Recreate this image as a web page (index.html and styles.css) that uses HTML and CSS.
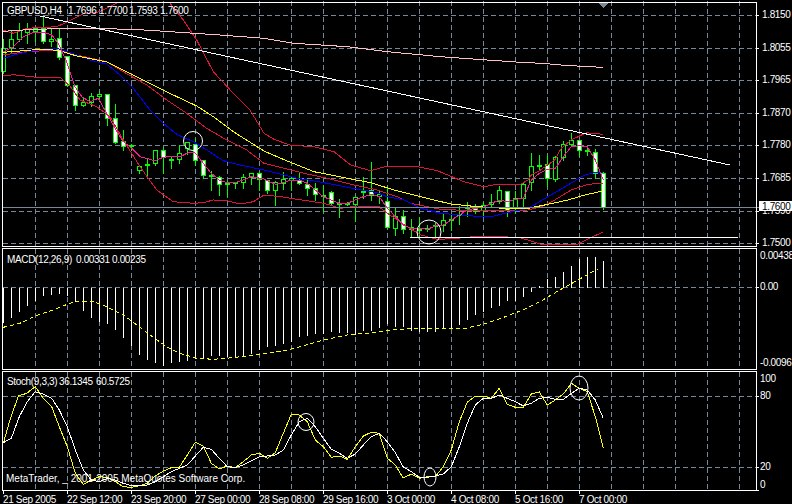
FILE: index.html
```html
<!DOCTYPE html>
<html lang="en">
<head>
<meta charset="UTF-8">
<meta name="viewport" content="width=device-width, initial-scale=1.0">
<title>GBPUSD,H4</title>
<link rel="stylesheet" href="styles.css">
</head>
<body>

<div class="chart">
    <!-- Price pane -->
    <svg id="price" class="pane" width="792" height="248">
        <g class="plot"></g>
        <rect class="frame" x="2.5" y="2.5" width="754" height="244"></rect>
        <polygon class="shift-mark" points="599,3 608,3 603.5,8"></polygon>
        <text class="legend" y="14">
            <tspan x="7">GBPUSD,H4</tspan>
            <tspan x="68">1.7696</tspan>
            <tspan x="99">1.7700</tspan>
            <tspan x="129">1.7593</tspan>
            <tspan x="160">1.7600</tspan>
        </text>
        <g class="axis">
            <text x="762" y="18">1.8150</text>
            <text x="762" y="51">1.8055</text>
            <text x="762" y="83">1.7965</text>
            <text x="762" y="116">1.7870</text>
            <text x="762" y="148">1.7780</text>
            <text x="762" y="181">1.7685</text>
            <text x="762" y="214">1.7590</text>
            <text x="762" y="246">1.7500</text>
        </g>
        <rect class="bid-box" x="759" y="201" width="33" height="10"></rect>
        <text class="bid-text" x="762" y="210">1.7600</text>
    </svg>

    <!-- MACD pane -->
    <svg id="macd" class="pane" width="792" height="123">
        <g class="plot"></g>
        <rect class="frame" x="2.5" y="0.5" width="754" height="121"></rect>
        <text class="legend" y="15">
            <tspan x="7">MACD(12,26,9)</tspan>
            <tspan x="76">0.00331</tspan>
            <tspan x="112">0.00235</tspan>
        </text>
        <g class="axis">
            <text x="760" y="11">0.00438</text>
            <text x="760" y="42">0.00</text>
            <text x="760" y="118">-0.00961</text>
        </g>
    </svg>

    <!-- Stochastic pane -->
    <svg id="stoch" class="pane" width="792" height="120">
        <g class="plot"></g>
        <rect class="frame" x="2.5" y="0.5" width="754" height="119"></rect>
        <text class="legend" y="14">
            <tspan x="7">Stoch(9,3,3)</tspan>
            <tspan x="59">36.1345</tspan>
            <tspan x="96">60.5725</tspan>
        </text>
        <text class="copyright" x="6" y="111">MetaTrader, _ 2001-2005 MetaQuotes Software Corp.</text>
        <g class="axis">
            <text x="760" y="11">100</text>
            <text x="760" y="28">80</text>
            <text x="760" y="99">20</text>
            <text x="760" y="117">0</text>
        </g>
    </svg>

    <!-- Time axis -->
    <div class="time-axis">
        <span>21 Sep 2005</span>
        <span>22 Sep 12:00</span>
        <span>23 Sep 20:00</span>
        <span>27 Sep 00:00</span>
        <span>28 Sep 08:00</span>
        <span>29 Sep 16:00</span>
        <span>3 Oct 00:00</span>
        <span>4 Oct 08:00</span>
        <span>5 Oct 16:00</span>
        <span>7 Oct 00:00</span>
    </div>
</div>

<script src="chart.js"></script>
</body>
</html>
```

FILE: styles.css
```css
body {
    margin: 0;
    background: #000;
    overflow: hidden;
}

.chart {
    display: flex;
    flex-direction: column;
    width: 792px;
    height: 504px;
    font-family: "Liberation Sans", Arial, sans-serif;
    font-size: 10px;
    letter-spacing: -0.35px;
    color: #fff;
}

.pane {
    display: block;
    flex: none;
    shape-rendering: crispEdges;
}

.frame {
    fill: none;
    stroke: #fff;
}

.pane text {
    fill: #fff;
    font-size: 10px;
}

.pane .copyright {
    letter-spacing: 0;
}

.shift-mark {
    fill: #778899;
}

.grid {
    stroke: #778899;
    stroke-dasharray: 5 3;
}

.price-line {
    stroke: #778899;
}

.tick {
    stroke: #fff;
}

.pane .bid-text {
    fill: #000;
}

.bid-box {
    fill: #fff;
}

.line {
    fill: none;
}

.circle {
    fill: none;
    stroke: #fff;
    shape-rendering: auto;
}

.wick { stroke: #00ff00; }
.candle-up { fill: #000; stroke: #00ff00; }
.candle-down { fill: #fff; stroke: #00ff00; }

.time-axis {
    display: flex;
    padding-left: 3px;
    height: 13px;
    line-height: 11px;
}

.time-axis span {
    width: 64px;
    flex: none;
    white-space: nowrap;
}

.time-axis span::before {
    content: "";
    display: block;
    width: 1px;
    height: 3px;
    background: #fff;
}
```

FILE: chart.js
```js
// all point lists are in 1/3 px, read off in chunks: [originX, originY, x, y, x, y, ...]
var NS = 'http://www.w3.org/2000/svg';

function add(parent, tag, attrs) {
    var el = document.createElementNS(NS, tag);
    for (var k in attrs) el.setAttribute(k, attrs[k]);
    parent.appendChild(el);
    return el;
}

function px(v) {
    return Math.floor(v / 3) + 0.5;
}

function points(chunks) {
    var out = [];
    chunks.forEach(function (c) {
        for (var i = 2; i < c.length; i += 2) {
            out.push((c[0] + c[i] / 3).toFixed(1) + ',' + (c[1] + c[i + 1] / 3).toFixed(1));
        }
    });
    return out.join(' ');
}

function line(parent, chunks, color, dash) {
    var el = add(parent, 'polyline', { 'class': 'line', points: points(chunks), stroke: color });
    if (dash) el.setAttribute('stroke-dasharray', dash);
}

function grid(plot, rows, bottom) {
    rows.forEach(function (y) {
        add(plot, 'line', { 'class': 'grid', x1: 3, x2: 756, y1: y + 0.5, y2: y + 0.5 });
        add(plot, 'line', { 'class': 'tick', x1: 757, x2: 759, y1: y + 0.5, y2: y + 0.5 });
    });
    for (var x = 35; x <= 739; x += 32) {
        add(plot, 'line', { 'class': 'grid', x1: x + 0.5, x2: x + 0.5, y1: 1, y2: bottom });
    }
}

// high, low, body top, body bottom, 1 = white body
var candles = [
    [115,220,145,215,0],[90,160,118,143,0],[66,125,90,118,0],[68,130,88,98,0],[78,125,85,95,0],
    [50,130,85,125,1],[85,140,118,125,0],[85,178,115,172,1],[168,258,170,256,1],[255,330,257,316,1],
    [290,320,306,316,0],[278,320,290,308,0],[270,305,283,290,0],[280,375,283,355,1],[310,430,355,427,1],
    [388,452,425,438,1],[430,450,436,438,0],[492,520,498,512,0],[475,525,493,495,0],[450,495,451,490,0],
    [440,520,451,472,1],[468,505,478,480,0],[432,490,460,478,0],[425,462,428,446,0],[415,497,432,481,1],
    [478,535,481,525,1],[510,572,525,527,0],[525,585,531,553,1],[540,590,549,552,0],[544,564,547,549,0],
    [520,565,533,547,0],[518,552,520,533,0],[515,570,521,538,1],[537,580,540,571,1],[540,617,548,571,0],
    [515,567,538,549,0],[530,570,535,540,0],[515,553,541,550,1],[533,587,552,565,1],[548,600,565,583,1],
    [553,634,585,587,0],[570,612,578,610,1],[595,653,610,613,0],[605,615,610,612,0],[590,665,593,613,0],
    [528,595,575,578,0],[483,600,572,585,1],[570,610,582,590,0],[560,685,605,682,1],[620,705,650,686,0],
    [628,700,650,688,1],[655,712,682,688,0],[650,712,688,690,0],[672,695,686,688,0],[668,712,675,677,0],
    [640,695,662,675,0],[640,692,658,661,0],[615,672,643,646,0],[605,650,623,626,0],[610,640,620,633,1],
    [605,645,615,630,0],[580,620,607,613,0],[555,610,572,605,0],[570,648,575,632,1],[570,640,595,625,0],
    [548,625,552,595,0],[456,572,498,548,0],[462,510,495,497,0],[462,560,492,535,1],[465,545,472,538,0],
    [420,480,433,472,0],[398,440,420,432,0],[418,470,421,452,1],[440,465,451,454,0],[444,535,457,520,1],
    [515,628,520,622,1]
];

// bottom of each MACD bar, measured from y = 245 in 1/3 px; the zero line sits at 127
var macdBars = [
    232,216,200,180,165,150,147,145,150,170,195,218,228,235,252,278,300,327,343,353,
    362,352,350,345,340,340,332,330,335,333,330,325,312,303,300,296,290,275,272,265,
    265,258,262,262,268,255,255,247,235,245,
    245,255,260,258,258,250,250,237,222,207,200,188,180,165,165,155,140,120,100,95,80,60,40,35,33,45
];

function drawPrice() {
    var plot = document.querySelector('#price .plot');
    grid(plot, [15, 48, 80, 113, 145, 178, 211, 243], 246);

    candles.forEach(function (c, i) {
        var x = 3 + 8 * i;
        add(plot, 'line', { 'class': 'wick', x1: x + 0.5, x2: x + 0.5, y1: px(c[0]), y2: px(c[1]) });
        add(plot, 'rect', {
            'class': c[4] ? 'candle-down' : 'candle-up',
            x: x - 1.5, width: 4,
            y: px(c[2]), height: Math.max(1, px(c[3]) - px(c[2]))
        });
    });

    // upper band, split where it leaves the top of the window
    line(plot, [[0, 0, 10,90, 40,100, 80,85, 170,80, 210,62, 250,42, 300,35, 350,10]], '#dc143c');
    line(plot, [[0, 0, 510,10, 550,60, 590,120, 640,215, 700,280, 750,330, 792,400],
        [264, 0, 30,418, 80,436, 150,440, 210,455, 260,495, 320,512, 370,498, 450,498, 520,512, 600,545, 660,560, 700,553, 770,553, 792,540],
        [528, 0, 10,525, 30,515, 80,480, 100,445, 130,420, 175,398, 224,403]], '#dc143c');
    // lower band
    line(plot, [[0, 0, 10,228, 40,224, 120,233, 180,232, 210,258, 240,300, 290,320, 330,350, 370,420, 420,500, 470,570, 520,605, 580,610, 610,608, 640,600, 680,602, 720,612, 760,605, 792,585],
        [264, 0, 50,590, 100,598, 180,610, 230,625, 280,618, 345,620, 370,640, 430,680, 470,705, 520,718, 570,716, 645,708, 695,708, 770,714, 792,720],
        [528, 0, 40,733, 90,735, 150,732, 190,712, 224,697]], '#dc143c');
    // middle band
    line(plot, [[0, 0, 10,165, 80,155, 170,150, 230,165, 320,185, 370,215, 440,255, 500,300, 560,340, 620,385, 680,420, 740,450, 792,490],
        [264, 0, 60,505, 120,520, 190,535, 270,555, 340,570, 400,590, 440,610, 530,628, 620,632, 792,630],
        [528, 0, 40,620, 80,600, 130,570, 180,553, 224,550]], '#dc143c');
    // slow averages
    line(plot, [[0, 0, 10,175, 60,160, 130,147, 170,145, 230,165, 270,180, 320,192, 360,225, 400,265, 450,330, 490,370, 530,403, 580,425, 620,450, 670,482, 720,495, 792,510],
        [264, 0, 60,525, 100,535, 180,548, 250,562, 340,578, 370,590, 420,600, 470,625, 530,640, 590,645, 650,650, 690,648, 730,638, 792,625],
        [528, 0, 60,590, 120,555, 170,525, 200,518, 226,518]], '#0000ff');
    line(plot, [[0, 0, 10,157, 60,153, 130,147, 180,152, 230,168, 320,186, 380,215, 440,245, 520,285, 590,318, 640,350, 700,395, 792,453],
        [264, 0, 50,475, 100,495, 150,515, 250,535, 320,548, 390,570, 470,590, 560,612, 640,620, 720,625, 792,625],
        [528, 0, 60,613, 120,600, 170,585, 224,573]], '#ffff00');
    // fast average
    line(plot, [[0, 0, 10,155, 40,140, 70,110, 100,97, 130,97, 155,105, 175,130, 200,185, 225,260, 245,290, 270,305, 295,295, 320,340, 345,385, 370,425, 395,445, 420,470, 465,482, 490,472, 515,468, 540,470, 565,458, 585,458, 610,490, 634,520, 658,540, 682,548, 706,548, 730,540, 754,530, 792,537],
        [264, 0, 34,553, 58,548, 82,540, 106,540, 130,550, 154,570, 178,590, 202,600, 226,610, 250,610, 274,600, 298,590, 322,583, 346,590, 370,625, 394,650, 418,675, 442,685, 466,685, 490,688, 514,678, 538,675, 562,660, 586,645, 610,630, 634,625, 658,622, 682,610, 706,600, 730,605, 754,598, 778,595],
        [528, 0, 10,540, 34,520, 58,508, 82,505, 106,470, 130,440, 154,437, 178,440, 202,480, 226,540]], '#ff1493');

    // 200 average and drawn trend lines
    line(plot, [[0, 0, 10,94, 100,88, 240,85, 400,88, 540,97, 660,105, 792,115],
        [264, 0, 90,130, 250,140, 370,155, 530,170, 670,180, 770,187],
        [528, 0, 40,190, 100,195, 180,200, 224,202]], '#ffc0cb');
    add(plot, 'polyline', { 'class': 'line', points: '40,16 730,165', stroke: '#fff' });
    add(plot, 'line', { x1: 410, x2: 738, y1: 237.5, y2: 237.5, stroke: '#fff' });
    add(plot, 'line', { 'class': 'price-line', x1: 3, x2: 759, y1: 207.5, y2: 207.5 });

    add(plot, 'circle', { 'class': 'circle', cx: 193, cy: 141, r: 9.5 });
    add(plot, 'circle', { 'class': 'circle', cx: 429, cy: 232, r: 12 });
}

function drawMacd() {
    var plot = document.querySelector('#macd .plot');
    grid(plot, [39], 121);

    // pane starts at y = 248
    macdBars.forEach(function (v, i) {
        var x = 3 + 8 * i + 0.5;
        add(plot, 'line', { x1: x, x2: x, y1: 39.5, y2: Math.floor(245 + v / 3 - 248) + 0.5, stroke: '#fff' });
    });
    line(plot, [[0, -3, 10,247, 60,235, 106,213, 160,195, 202,178, 230,168, 280,170, 320,185, 370,210, 400,232, 450,270, 500,305, 540,325, 590,340, 640,343, 700,338, 790,326, 850,318, 900,305, 970,285, 1040,270, 1100,265, 1186,254],
        [396, -3, 50,250, 210,250, 260,238, 320,218, 380,195, 440,165, 500,130, 550,103, 605,72]], '#ffff00', '4 3');
}

function drawStoch() {
    var plot = document.querySelector('#stoch .plot');
    grid(plot, [25, 96, 119], 119);

    // pane starts at y = 371
    line(plot, [[0, -1, 10,220, 30,150, 55,78, 80,70, 106,50, 130,85, 155,110, 178,170, 202,230, 226,310, 250,343, 274,330, 298,320, 322,322, 346,335, 370,350, 394,352, 418,347, 442,340, 466,318, 490,303, 514,293, 538,292, 562,255, 586,217, 610,228, 634,280, 658,297, 682,288, 706,293, 730,275, 754,255, 778,250, 802,265, 826,248, 850,190, 874,133, 898,135, 922,155, 946,210, 970,230, 994,262, 1018,258, 1042,268, 1066,230, 1090,198, 1114,187, 1138,190, 1162,265, 1186,285],
        [396, -1, 21,323, 46,313, 70,325, 94,320, 118,320, 142,290, 166,240, 190,155, 214,97, 238,78, 262,78, 286,85, 310,55, 334,103, 358,112, 382,112, 406,72, 430,66, 454,105, 478,90, 502,72, 526,40, 550,55, 574,65, 598,140, 622,233]], '#ffff00');
    line(plot, [[0, -1, 10,218, 34,205, 58,140, 82,95, 106,65, 130,72, 155,85, 178,120, 202,170, 226,240, 250,300, 274,330, 298,335, 322,325, 346,330, 370,340, 394,347, 418,347, 442,345, 466,335, 490,320, 514,305, 538,295, 562,285, 586,258, 610,232, 634,238, 658,265, 682,290, 706,293, 730,285, 754,272, 778,260, 802,258, 826,255, 850,240, 874,195, 898,155, 922,145, 946,170, 970,205, 994,238, 1018,250, 1042,265, 1066,252, 1090,225, 1114,200, 1138,190, 1162,215, 1186,248],
        [396, -1, 21,290, 46,305, 70,322, 94,322, 118,318, 142,312, 166,290, 190,230, 214,160, 238,105, 262,85, 286,85, 310,75, 334,85, 358,95, 382,108, 406,100, 430,85, 454,82, 478,88, 502,88, 526,70, 550,55, 574,60, 598,90, 622,145]], '#fff');

    add(plot, 'ellipse', { 'class': 'circle', cx: 306, cy: 51, rx: 8, ry: 8.5 });
    add(plot, 'ellipse', { 'class': 'circle', cx: 430, cy: 106, rx: 6, ry: 9 });
    add(plot, 'ellipse', { 'class': 'circle', cx: 579, cy: 17, rx: 9, ry: 12 });
}

drawPrice();
drawMacd();
drawStoch();
```
